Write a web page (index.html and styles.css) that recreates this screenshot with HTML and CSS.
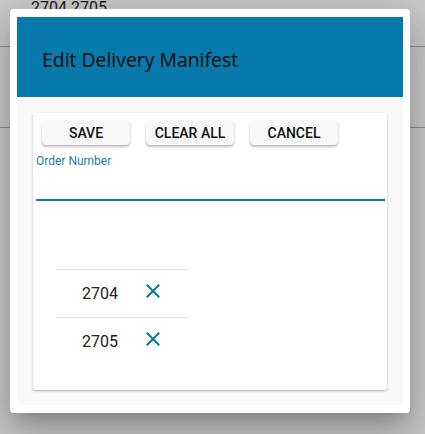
FILE: index.html
```html
<!DOCTYPE html>
<html>
<head>
<meta charset="utf-8">
<link rel="stylesheet" href="styles.css">
</head>
<body>
<div class="page">
  <div class="page-text">2704 2705</div>
  <div class="page-rule first"></div>
  <div class="page-rule second"></div>
</div>
<div class="overlay"></div>
<div class="dialog">
  <div class="dialog-header">
    <h1 class="dialog-title">Edit Delivery Manifest</h1>
  </div>
  <div class="dialog-body">
    <div class="card">
      <div class="actions">
        <button class="btn">SAVE</button>
        <button class="btn">CLEAR ALL</button>
        <button class="btn">CANCEL</button>
      </div>
      <div class="field">
        <label class="field-label">Order Number</label>
        <div class="field-input"></div>
      </div>
      <div class="list">
        <div class="row">
          <span class="row-num">2704</span>
          <svg class="row-icon" viewBox="0 0 24 24" width="24" height="24"><path d="M19 6.41L17.59 5 12 10.59 6.41 5 5 6.41 10.59 12 5 17.59 6.41 19 12 13.41 17.59 19 19 17.59 13.41 12z"/></svg>
        </div>
        <div class="row">
          <span class="row-num">2705</span>
          <svg class="row-icon" viewBox="0 0 24 24" width="24" height="24"><path d="M19 6.41L17.59 5 12 10.59 6.41 5 5 6.41 10.59 12 5 17.59 6.41 19 12 13.41 17.59 19 19 17.59 13.41 12z"/></svg>
        </div>
      </div>
    </div>
  </div>
</div>
</body>
</html>
```
FILE: styles.css
```css
html, body {
  margin: 0;
  padding: 0;
  background: #ffffff;
  font-family: Roboto, "Liberation Sans", sans-serif;
}

.page {
  height: 434px;
  overflow: hidden;
}

.page-text {
  padding-left: 31px;
  font-size: 16px;
  line-height: 16px;
  color: #222;
}

.page-rule {
  border-top: 1px solid #b0b0b0;
}

.page-rule.first {
  margin-top: 30px;
}

.page-rule.second {
  margin-top: 80px;
}

.overlay {
  position: fixed;
  inset: 0;
  background: rgba(0, 0, 0, 0.22);
}

.dialog {
  position: fixed;
  left: 10px;
  top: 9px;
  width: 400px;
  height: 404px;
  box-sizing: border-box;
  padding: 8px 7px;
  background: #ffffff;
  border-radius: 4px;
  display: flex;
  flex-direction: column;
  box-shadow: 0 11px 15px -7px rgba(0,0,0,0.2), 0 24px 38px 3px rgba(0,0,0,0.14), 0 9px 46px 8px rgba(0,0,0,0.12);
}

.dialog-header {
  height: 80px;
  background: #0779ab;
  display: flex;
  align-items: center;
  padding-left: 25px;
  flex-shrink: 0;
}

.dialog-title {
  margin: 0;
  font-family: "Open Sans", "Noto Sans", sans-serif;
  font-weight: 400;
  font-size: 19.4px;
  color: #0a0a0a;
  padding-top: 4px;
}

.dialog-body {
  flex: 1;
  background: #f9f9f9;
  padding: 16px 16px 15px;
}

.card {
  height: 100%;
  box-sizing: border-box;
  background: #ffffff;
  border-radius: 2px;
  box-shadow: 0 1px 3px rgba(0,0,0,0.2), 0 1px 1px rgba(0,0,0,0.12);
  padding: 7px 2px 0 3px;
}

.actions {
  display: flex;
  gap: 16px;
  margin-left: 6px;
}

.btn {
  width: 88px;
  height: 25px;
  border: none;
  border-radius: 4px;
  background: #f7f7f7;
  font-family: Roboto, sans-serif;
  font-weight: 500;
  font-size: 14px;
  color: #111;
  padding: 0;
  box-shadow: 0 2px 3px rgba(0,0,0,0.2), 0 1px 1px rgba(0,0,0,0.12);
}

.field {
  margin-top: 9px;
}

.field-label {
  display: block;
  font-size: 12px;
  line-height: 14px;
  color: #1b7db0;
}

.field-input {
  height: 31px;
  border-bottom: 2px solid #0c79ab;
}

.list {
  margin-top: 68px;
  margin-left: 21px;
  width: 132px;
}

.row {
  height: 47px;
  border-top: 1px solid #e0e0e0;
  display: flex;
  align-items: center;
}

.row-num {
  margin-left: 25px;
  width: 59px;
  font-size: 16px;
  color: #222;
}

.row-icon {
  fill: #0c79ab;
  margin-bottom: 5px;
}
```
